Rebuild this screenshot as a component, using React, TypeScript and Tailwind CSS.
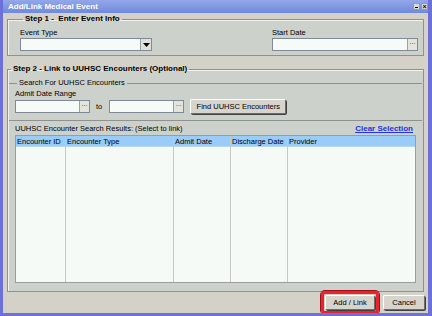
import React from "react";

const font = { fontFamily: '"Liberation Sans", Arial, sans-serif' };

const DateBox = ({ w }: { w: string }) => (
  <div className={`flex h-[13px] ${w} border border-[#7f8a96] bg-[#f7fbf8]`}>
    <div className="flex-1" />
    <div className="flex w-[10px] items-start justify-center border-l border-[#9aa0a6] bg-[#e4e4dc] text-[7px] leading-[6px] text-[#333]">
      ...
    </div>
  </div>
);

const XpButton = ({ label, w }: { label: string; w: string }) => (
  <div
    className={`flex h-[15px] ${w} items-center justify-center whitespace-nowrap rounded-[2px] border border-t-[#ffffff] border-l-[#ffffff] border-r-[#6d6d69] border-b-[#6d6d69] bg-[#d6d4cc] text-[7.5px] text-black shadow-[1px_1px_0_#404040]`}
  >
    {label}
  </div>
);

const columns = [
  ["Encounter ID", "w-[50px]"],
  ["Encounter Type", "w-[108px]"],
  ["Admit Date", "w-[57px]"],
  ["Discharge Date", "w-[57px]"],
  ["Provider", "flex-1"],
];

export default function App() {
  return (
    <div
      style={font}
      className="flex h-[316px] w-[432px] flex-col overflow-hidden border-b-[3px] border-l-[3px] border-r-[4px] border-[#6c70d8] bg-[#d4d1c9] text-black"
    >
      {/* Title bar */}
      <div className="-ml-[3px] -mr-[4px] flex h-[13px] shrink-0 items-center bg-gradient-to-b from-[#93a7ea] to-[#7089da] pl-[8px] pr-[4px]">
        <span className="text-[8px] font-bold leading-none text-white">Add/Link Medical Event</span>
        <div className="ml-auto flex gap-[1px]">
          <div className="flex h-[7px] w-[7px] items-end justify-center border border-[#9a9a94] bg-[#dcdcd6] pb-[1px]">
            <div className="h-[1px] w-[3px] bg-black" />
          </div>
          <div className="flex h-[7px] w-[7px] items-center justify-center border border-[#9a9a94] bg-[#dcdcd6] text-[7px] font-bold leading-none">
            ×
          </div>
        </div>
      </div>

      {/* Step 1 */}
      <fieldset className="ml-[4px] mr-[4px] mt-[1px] border border-[#8e918d] bg-[#cdd1cc] px-[12px] pb-[4px] pt-[4px] shadow-[inset_1px_1px_0_#f2f2ee]">
        <legend className="ml-[3px] px-[2px] text-[8px] font-bold leading-[10px]">Step 1 -&nbsp; Enter Event Info</legend>
        <div className="flex">
          <div className="flex flex-col">
            <span className="text-[7.5px] leading-[10px]">Event Type</span>
            <div className="flex h-[13px] w-[132px] border border-[#7f8a96] bg-[#f7fbf8]">
              <div className="flex-1" />
              <div className="flex w-[11px] items-center justify-center border-l border-[#9aa0a6] bg-[#e0e0d8]">
                <svg width="7" height="4" viewBox="0 0 7 4">
                  <path d="M0 0h7L3.5 4z" fill="#000" />
                </svg>
              </div>
            </div>
          </div>
          <div className="ml-auto mr-[-7px] flex flex-col">
            <span className="text-[7.5px] leading-[10px]">Start Date</span>
            <DateBox w="w-[146px]" />
          </div>
        </div>
      </fieldset>

      {/* Step 2 */}
      <fieldset className="ml-[4px] mr-[4px] mt-[8px] flex-1 border border-[#8e918d] bg-[#cdd1cc] px-0 pb-[6px] pt-0 shadow-[inset_1px_1px_0_#f2f2ee]">
        <legend className="ml-[3px] px-[2px] text-[8px] font-bold leading-[10px]">
          Step 2 - Link to UUHSC Encounters (Optional)
        </legend>
        <fieldset className="mx-[1px] mt-[4px] border-t border-b border-[#8e918d] px-[6px] pb-[6px] pt-[1px]">
          <legend className="ml-[2px] px-[2px] text-[7.5px] leading-[10px]">Search For UUHSC Encounters</legend>
          <div className="text-[7.5px] leading-[10px]">Admit Date Range</div>
          <div className="flex items-center">
            <DateBox w="w-[75px]" />
            <span className="ml-[6px] mr-[7px] text-[7.5px]">to</span>
            <DateBox w="w-[75px]" />
            <div className="ml-[6px]">
              <XpButton label="Find UUHSC Encounters" w="w-[96px]" />
            </div>
          </div>
        </fieldset>

        <div className="mx-[7px] mt-[3px] flex items-end">
          <span className="text-[7.5px] leading-[10px]">UUHSC Encounter Search Results: (Select to link)</span>
          <span className="ml-auto mr-[3px] text-[8px] font-bold leading-[10px] text-[#1e32e6] underline">
            Clear Selection
          </span>
        </div>

        <div className="mx-[7px] mt-[1px] flex h-[148px] border border-[#9a9d99] bg-[#f5faf7] text-[7.5px]">
          {columns.map(([label, w], i) => (
            <div key={label} className={`flex flex-col ${w} ${i < 4 ? "border-r border-[#c6c9c5]" : ""}`}>
              <div className="h-[11px] overflow-hidden whitespace-nowrap border-b border-[#b9d7f0] bg-[#99ccf8] pl-[1px] leading-[11px]">
                {label}
              </div>
            </div>
          ))}
        </div>
      </fieldset>

      {/* Footer */}
      <div className="flex h-[21px] shrink-0 items-center justify-end pr-[3px]">
        <div className="mr-[4px] rounded-[4px] border-[3px] border-[#e8242c] p-[1px] shadow-[0_0_0_1px_#a01018]">
          <XpButton label="Add / Link" w="w-[50px]" />
        </div>
        <XpButton label="Cancel" w="w-[42px]" />
      </div>
    </div>
  );
}
